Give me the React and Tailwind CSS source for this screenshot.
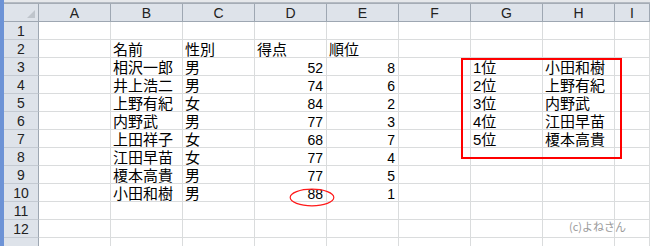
const columns = ['A', 'B', 'C', 'D', 'E', 'F', 'G', 'H', 'I'];

// cells keyed by column letter, per row
const rows = [
  {},
  { B: '名前', C: '性別', D: '得点', E: '順位' },
  { B: '相沢一郎', C: '男', D: 52, E: 8, G: '1位', H: '小田和樹' },
  { B: '井上浩二', C: '男', D: 74, E: 6, G: '2位', H: '上野有紀' },
  { B: '上野有紀', C: '女', D: 84, E: 2, G: '3位', H: '内野武' },
  { B: '内野武', C: '男', D: 77, E: 3, G: '4位', H: '江田早苗' },
  { B: '上田祥子', C: '女', D: 68, E: 7, G: '5位', H: '榎本高貴' },
  { B: '江田早苗', C: '女', D: 77, E: 4 },
  { B: '榎本高貴', C: '男', D: 77, E: 5 },
  { B: '小田和樹', C: '男', D: 88, E: 1 },
  {},
  {},
  {},
];

function Cell({ value }) {
  const isNum = typeof value === 'number';
  return (
    <div
      className={`h-[18px] border-r border-b border-[#dadcdd] flex items-center pt-[2px] leading-[16px] overflow-visible whitespace-nowrap text-black ${
        isNum ? 'justify-end pr-[3px] text-[14px]' : 'pl-[2px] text-[15px]'
      }`}
    >
      {value}
    </div>
  );
}

export default function App() {
  return (
    <div
      className="w-[650px] h-[246px] overflow-hidden bg-white flex"
      style={{ fontFamily: '"Liberation Sans", "Noto Sans CJK JP", sans-serif' }}
    >
      <div className="w-[4px] shrink-0 bg-[#6d93d6]" />
      <div className="relative flex-1 flex flex-col">
        {/* toolbar edge lines */}
        <div className="h-[7px] bg-[#f4f5f6] border-t-[2px] border-t-[#e6e8eb] border-b border-b-[#a5acb5]">
          <div className="h-px bg-[#b4bac2]" />
        </div>

        <div className="grid grid-cols-[35px_repeat(8,72px)_1fr]">
          {/* corner */}
          <div className="h-[18px] bg-[#dee3ea] border-r border-b border-[#9ea7b2] flex items-end justify-end pr-[3px] pb-[3px]">
            <div className="w-0 h-0 border-l-[8px] border-l-transparent border-b-[8px] border-b-[#bfc5cc]" />
          </div>
          {columns.map((c) => (
            <div
              key={c}
              className="h-[18px] bg-[#dee3ea] border-r border-b border-[#9ea7b2] flex items-center justify-center pt-[1px] leading-[16px] text-[14px] text-[#222]"
            >
              {c}
            </div>
          ))}

          {rows.map((row, i) => (
            <div key={i} className="contents">
              <div className="h-[18px] bg-[#dee3ea] border-r border-b border-r-[#9ea7b2] border-b-[#c4cad2] flex items-center justify-center pt-[1px] leading-[16px] text-[14px] text-[#222]">
                {i < 12 ? i + 1 : ''}
              </div>
              {columns.map((c) => (
                <Cell key={c} value={row[c]} />
              ))}
            </div>
          ))}
        </div>

        {/* ranking box around G3:H7 */}
        <div className="absolute left-[457px] top-[58px] w-[161px] h-[101px] border-[2px] border-[#ff0000]" />

        {/* circle around D10 */}
        <svg className="absolute left-[285px] top-[188px]" width="46" height="19" viewBox="0 0 46 19">
          <ellipse cx="23" cy="9.5" rx="21.8" ry="8.3" fill="none" stroke="#ff1a1a" strokeWidth="1.2" />
        </svg>

        <div
          className="absolute left-[565px] top-[221px] text-[11px] text-[#9a9a9a] leading-none"
          style={{ fontFamily: '"Noto Sans CJK JP", sans-serif' }}
        >
          (c)よねさん
        </div>
      </div>
    </div>
  );
}
